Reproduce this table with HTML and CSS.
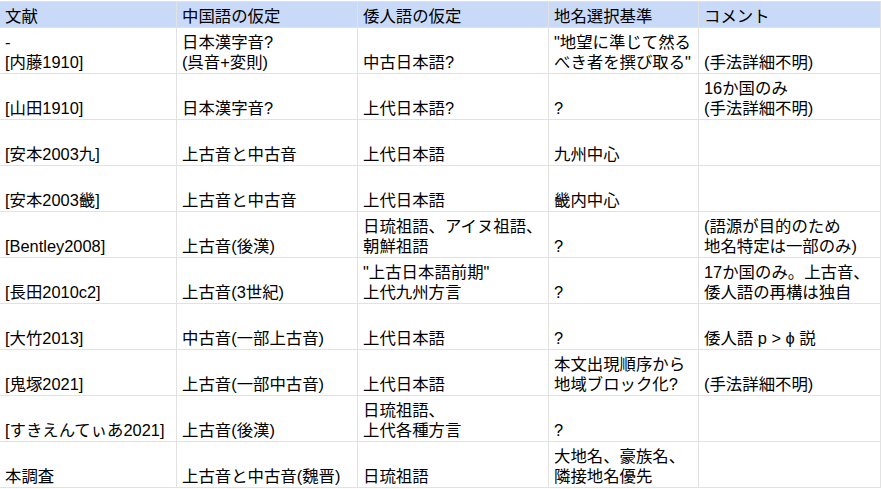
FILE: index.html
```html
<!DOCTYPE html>
<html lang="ja">
<head>
<meta charset="utf-8">
<link rel="stylesheet" href="styles.css">
</head>
<body>
<div class="sheet">
  <div class="cell head">文献</div>
  <div class="cell head">中国語の仮定</div>
  <div class="cell head">倭人語の仮定</div>
  <div class="cell head">地名選択基準</div>
  <div class="cell head">コメント</div>

  <div class="cell">-<br>[内藤1910]</div>
  <div class="cell">日本漢字音?<br>(呉音+変則)</div>
  <div class="cell">中古日本語?</div>
  <div class="cell">"地望に準じて然る<br>べき者を撰び取る"</div>
  <div class="cell">(手法詳細不明)</div>

  <div class="cell">[山田1910]</div>
  <div class="cell">日本漢字音?</div>
  <div class="cell">上代日本語?</div>
  <div class="cell">?</div>
  <div class="cell">16か国のみ<br>(手法詳細不明)</div>

  <div class="cell">[安本2003九]</div>
  <div class="cell">上古音と中古音</div>
  <div class="cell">上代日本語</div>
  <div class="cell">九州中心</div>
  <div class="cell"></div>

  <div class="cell">[安本2003畿]</div>
  <div class="cell">上古音と中古音</div>
  <div class="cell">上代日本語</div>
  <div class="cell">畿内中心</div>
  <div class="cell"></div>

  <div class="cell">[Bentley2008]</div>
  <div class="cell">上古音(後漢)</div>
  <div class="cell">日琉祖語、アイヌ祖語、<br>朝鮮祖語</div>
  <div class="cell">?</div>
  <div class="cell">(語源が目的のため<br>地名特定は一部のみ)</div>

  <div class="cell">[長田2010c2]</div>
  <div class="cell">上古音(3世紀)</div>
  <div class="cell">"上古日本語前期"<br>上代九州方言</div>
  <div class="cell">?</div>
  <div class="cell">17か国のみ。上古音、<br>倭人語の再構は独自</div>

  <div class="cell">[大竹2013]</div>
  <div class="cell">中古音(一部上古音)</div>
  <div class="cell">上代日本語</div>
  <div class="cell">?</div>
  <div class="cell">倭人語 p &gt; ϕ 説</div>

  <div class="cell">[鬼塚2021]</div>
  <div class="cell">上古音(一部中古音)</div>
  <div class="cell">上代日本語</div>
  <div class="cell">本文出現順序から<br>地域ブロック化?</div>
  <div class="cell">(手法詳細不明)</div>

  <div class="cell">[すきえんてぃあ2021]</div>
  <div class="cell">上古音(後漢)</div>
  <div class="cell">日琉祖語、<br>上代各種方言</div>
  <div class="cell">?</div>
  <div class="cell"></div>

  <div class="cell">本調査</div>
  <div class="cell">上古音と中古音(魏晋)</div>
  <div class="cell">日琉祖語</div>
  <div class="cell">大地名、豪族名、<br>隣接地名優先</div>
  <div class="cell"></div>
</div>
</body>
</html>
```

FILE: styles.css
```css
html, body {
  margin: 0;
  padding: 0;
  background: #ffffff;
}

body {
  padding-top: 1px;
  font-family: "Liberation Sans", "Noto Sans CJK JP", sans-serif;
  font-size: 16.4px;
  color: #000000;
}

.sheet {
  display: grid;
  grid-template-columns: 177px 181px 191px 150px 182px;
  grid-auto-rows: 46px;
  grid-template-rows: 26px;
  border-top: 1px solid #e2e2e2;
  width: 881px;
}

.cell {
  box-sizing: border-box;
  border-right: 1px solid #e2e2e2;
  border-bottom: 1px solid #e2e2e2;
  padding: 0 4px 1px 5px;
  display: flex;
  flex-direction: column;
  justify-content: flex-end;
  line-height: 20px;
  white-space: nowrap;
  overflow: hidden;
}

.head {
  background: #c9daf8;
}
```
